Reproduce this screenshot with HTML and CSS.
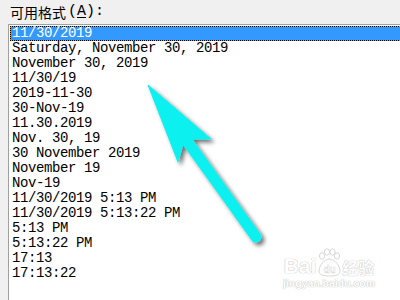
FILE: index.html
```html
<!DOCTYPE html>
<html>
<head>
<meta charset="utf-8">
<link rel="stylesheet" href="styles.css">
</head>
<body>
<div class="page">
  <div class="label"><span class="cjk">可用格式</span><span class="mono">(<u>A</u>):</span></div>
  <div class="listbox">
    <div class="row selected">11/30/2019</div>
    <div class="row">Saturday, November 30, 2019</div>
    <div class="row">November 30, 2019</div>
    <div class="row">11/30/19</div>
    <div class="row">2019-11-30</div>
    <div class="row">30-Nov-19</div>
    <div class="row">11.30.2019</div>
    <div class="row">Nov. 30, 19</div>
    <div class="row">30 November 2019</div>
    <div class="row">November 19</div>
    <div class="row">Nov-19</div>
    <div class="row">11/30/2019 5:13 PM</div>
    <div class="row">11/30/2019 5:13:22 PM</div>
    <div class="row">5:13 PM</div>
    <div class="row">5:13:22 PM</div>
    <div class="row">17:13</div>
    <div class="row">17:13:22</div>
  </div>
  <svg class="arrow" width="400" height="300" viewBox="0 0 400 300">
    <defs>
      <filter id="sh" x="-20%" y="-20%" width="140%" height="140%">
        <feDropShadow dx="3" dy="3" stdDeviation="2" flood-color="#000" flood-opacity="0.55"/>
      </filter>
    </defs>
    <g filter="url(#sh)" fill="#11f0f0" stroke="#11f0f0">
      <line x1="187" y1="141" x2="256" y2="237" stroke-width="11" stroke-linecap="round"/>
      <polygon points="148,85 211,139 192,139 183,144 178,162" stroke-width="1" stroke-linejoin="miter"/>
    </g>
  </svg>
  <div class="watermark">
    <div class="wm-top">
      <span class="wm-bai">Bai</span>
      <svg class="wm-paw" width="24" height="30" viewBox="0 0 24 30">
        <g fill="#fff" stroke="#d8d8d8" stroke-width="1">
          <ellipse cx="5" cy="9" rx="2.6" ry="3.2"/>
          <ellipse cx="10" cy="5" rx="2.6" ry="3.2"/>
          <ellipse cx="15.5" cy="5" rx="2.6" ry="3.2"/>
          <ellipse cx="20" cy="9" rx="2.6" ry="3.2"/>
          <path d="M12.5 12 C7 12 2 19 2 24 C2 28 6 29 12.5 29 C19 29 23 28 23 24 C23 19 18 12 12.5 12 Z"/>
        </g>
        <text x="12.5" y="26" text-anchor="middle" class="wm-du">du</text>
      </svg>
      <span class="wm-jy">经验</span>
    </div>
    <div class="wm-url">jingyan.baidu.com</div>
  </div>
</div>
</body>
</html>
```
FILE: styles.css
```css
html, body {
  margin: 0;
  padding: 0;
  background: #f0f0f0;
}
.page {
  position: relative;
  width: 400px;
  height: 300px;
  overflow: hidden;
}
.label {
  height: 24px;
  padding-left: 10px;
  line-height: 24px;
  color: #000;
  display: flex;
  align-items: center;
  white-space: nowrap;
}
.label .cjk {
  font-family: "Noto Sans CJK SC", sans-serif;
  font-size: 14px;
}
.label .mono {
  font-family: "Liberation Mono", monospace;
  font-size: 15px;
  margin-left: 2px;
}
.label u {
  text-decoration-thickness: 1px;
  text-underline-offset: 2px;
}
.listbox {
  margin-left: 8px;
  width: 420px;
  height: 300px;
  box-sizing: border-box;
  border: 1px solid #a0a0a0;
  background: #fff;
  padding: 1px 0 0 1px;
}
.row {
  height: 15px;
  line-height: 15px;
  padding-left: 2px;
  font-family: "Liberation Mono", monospace;
  font-size: 14px;
  letter-spacing: -0.4px;
  color: #000;
  white-space: nowrap;
}
.row.selected {
  box-sizing: border-box;
  padding-left: 1px;
  line-height: 13px;
  color: #fff;
  border: 1px dotted #000;
  background: linear-gradient(#3399ff, #3399ff) padding-box,
              linear-gradient(#d9923a, #d9923a) border-box;
}
.arrow {
  position: absolute;
  left: 0;
  top: 0;
}
.watermark {
  position: absolute;
  left: 283px;
  top: 246px;
  width: 92px;
  display: flex;
  flex-direction: column;
  align-items: center;
}
.wm-top {
  display: flex;
  align-items: flex-end;
  height: 31px;
}
.wm-bai {
  font-family: "Liberation Sans", sans-serif;
  font-weight: bold;
  font-size: 21px;
  line-height: 22px;
  color: #fff;
  text-shadow: 0 0 1px #b8b8b8, 0 0 1px #c8c8c8;
}
.wm-paw {
  display: block;
  margin: 0 1px;
}
.wm-du {
  font-family: "Liberation Sans", sans-serif;
  font-weight: bold;
  font-size: 10px;
  fill: #fff;
  stroke: #d0d0d0;
  stroke-width: 0.4px;
}
.wm-jy {
  font-family: "Noto Sans CJK SC", sans-serif;
  font-weight: bold;
  font-size: 16px;
  line-height: 20px;
  color: #fff;
  text-shadow: 0 0 1px #b8b8b8, 0 0 1px #c8c8c8;
}
.wm-url {
  font-family: "Liberation Sans", sans-serif;
  font-weight: bold;
  font-size: 10.5px;
  line-height: 12px;
  color: #fff;
  text-shadow: 0 0 1px #b8b8b8, 0 0 1px #c8c8c8;
}
```
